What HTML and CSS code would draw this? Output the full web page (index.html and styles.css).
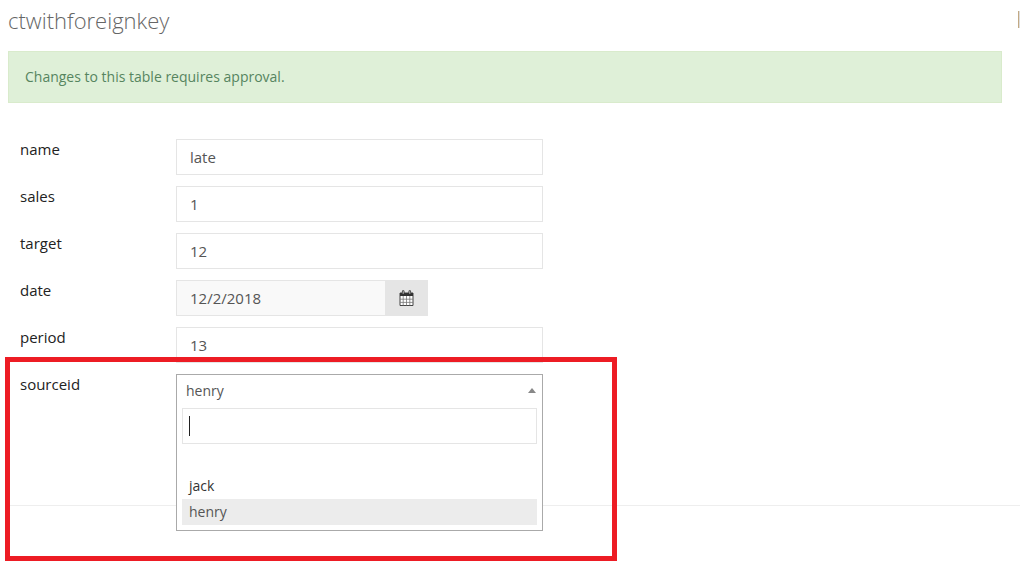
FILE: index.html
```
<!DOCTYPE html>
<html lang="en">
<head>
  <meta charset="UTF-8" />
  <meta name="viewport" content="width=device-width, initial-scale=1.0" />
  <title>ctwithforeignkey</title>
  <link rel="stylesheet" href="styles.css">
</head>
<body>
  <header class="page-header">
    <h1>ctwithforeignkey</h1>
    <span class="divider"></span>
  </header>

  <div class="alert" role="alert">Changes to this table requires approval.</div>

  <form class="edit-form">
    <div class="row">
      <label for="name">name</label>
      <input class="field" type="text" id="name" value="late">
    </div>
    <div class="row">
      <label for="sales">sales</label>
      <input class="field" type="text" id="sales" value="1">
    </div>
    <div class="row">
      <label for="target">target</label>
      <input class="field" type="text" id="target" value="12">
    </div>
    <div class="row">
      <label for="date">date</label>
      <div class="date-group">
        <input class="field" type="text" id="date" value="12/2/2018" readonly>
        <button type="button" class="date-btn" aria-label="Pick a date">
          <svg width="15" height="16" viewBox="0 0 15 16">
            <path d="M1 3h13v12.5H1z" fill="#fff" stroke="#444" />
            <path d="M1 3h13v3H1z" fill="#333" />
            <path d="M4.2 6v9.5M7.5 6v9.5M10.8 6v9.5M1 9.2h13M1 12.4h13" stroke="#777" stroke-width=".8" />
            <path d="M4.2 1.5v2.5M10.8 1.5v2.5" stroke="#333" stroke-width="2.6" stroke-linecap="round" />
            <path d="M4.2 1.2v2.6M10.8 1.2v2.6" stroke="#ccc" stroke-width="1" />
          </svg>
        </button>
      </div>
    </div>
    <div class="row">
      <label for="period">period</label>
      <input class="field" type="text" id="period" value="13">
    </div>
    <div class="row row-source">
      <label for="sourceid">sourceid</label>
      <div class="combo">
        <div class="combo-box">
          <button type="button" class="combo-toggle" id="sourceid" aria-haspopup="listbox" aria-expanded="true">
            henry
            <span class="arrow"></span>
          </button>
          <div class="combo-search">
            <input type="text" aria-label="Search">
            <span class="caret"></span>
          </div>
          <ul class="options" role="listbox">
            <li role="option"></li>
            <li role="option">jack</li>
            <li role="option" class="selected" aria-selected="true">henry</li>
          </ul>
        </div>
      </div>
      <div class="highlight"></div>
    </div>
  </form>

  <hr class="form-end">
</body>
</html>
```

FILE: styles.css
```
* {
  box-sizing: border-box;
}

body {
  min-height: 100vh;
  margin: 0;
  padding: 0 4px 0 8px;
  background-color: #fff;
  color: #333;
  font-family: "Open Sans", sans-serif;
  font-size: 15px;
  line-height: 20px;
}

input,
button {
  font: inherit;
  color: #555;
}

.page-header {
  display: flex;
  justify-content: space-between;
  align-items: center;
  height: 39px;
}

h1 {
  margin: 0;
  color: #666;
  font-size: 22px;
  font-weight: 300;
  line-height: 32px;
}

.divider {
  width: 2px;
  height: 17px;
  background-color: #c3a983;
  border-right: 1px solid #ddd;
}

.alert {
  margin: 12px 18px 0 0;
  padding: 15px 16px;
  background-color: #dff0d8;
  border: 1px solid #d9ebcc;
  color: #56855f;
  font-size: 14px;
}

.edit-form {
  display: flex;
  flex-direction: column;
  gap: 11px;
  padding: 36px 12px 0;
}

.row {
  display: grid;
  grid-template-columns: 156px minmax(0, 367px);
  height: 36px;
}

.row label {
  color: #222;
}

.field {
  width: 100%;
  height: 36px;
  padding: 0 13px;
  background-color: #fff;
  border: 1px solid #e5e5e5;
  border-radius: 0;
  outline: none;
}

.date-group {
  display: flex;
  width: 252px;
}

.date-group .field {
  flex: 1;
  min-width: 0;
  background-color: #f9f9f9;
  border-right: 0;
}

.date-btn {
  display: flex;
  align-items: center;
  justify-content: center;
  width: 43px;
  padding: 0;
  background-color: #e5e5e5;
  border: 0;
}

.row-source {
  position: relative;
}

.combo {
  position: relative;
}

/* open list lies over the rule under the form */
.combo-box {
  position: absolute;
  top: 0;
  left: 0;
  z-index: 1;
  width: 100%;
  padding: 0 5px 5px;
  background-color: #fff;
  border: 1px solid #aaa;
}

.combo-toggle {
  display: flex;
  align-items: center;
  justify-content: space-between;
  width: 100%;
  height: 33px;
  padding: 0 1px 2px 4px;
  background: none;
  border: 0;
  font-size: 14px;
}

.arrow {
  border: 4px solid transparent;
  border-top: 0;
  border-bottom: 5px solid #888;
}

.combo-search {
  position: relative;
}

.combo-search input {
  display: block;
  width: 100%;
  height: 36px;
  padding: 0 7px;
  border: 1px solid #e5e5e5;
  outline: none;
}

.caret {
  position: absolute;
  top: 8px;
  left: 7px;
  width: 1px;
  height: 20px;
  background-color: #222;
}

.options {
  margin: 3px 0 0;
  padding: 0;
  list-style: none;
}

.options li {
  height: 26px;
  padding: 0 7px;
  font-size: 14px;
  line-height: 26px;
}

.options .selected {
  background-color: #ececec;
  color: #555;
}

.highlight {
  position: absolute;
  top: -17px;
  left: -15px;
  z-index: 2;
  width: 612px;
  height: 204px;
  border: 5px solid #ed1c24;
  pointer-events: none;
}

.form-end {
  margin: 95px 0 0;
  border: 0;
  border-top: 1px solid #eee;
}
```
